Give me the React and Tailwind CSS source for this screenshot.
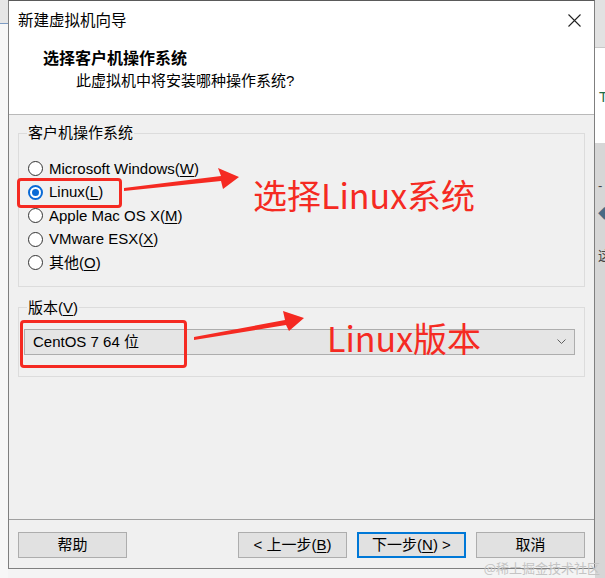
import React from 'react';

const font = "font-['Liberation_Sans','Noto_Sans_CJK_SC',sans-serif]";

const Radio = ({ checked, children }) => (
  <div className="flex items-center h-[23.5px]">
    <span
      className={`ml-[4px] w-[15px] h-[15px] rounded-full flex items-center justify-center bg-white ${
        checked ? 'border-2 border-[#0a6ad6]' : 'border border-[#333333]'
      }`}
    >
      {checked && <span className="w-[7px] h-[7px] rounded-full bg-[#0a6ad6]" />}
    </span>
    <span className="ml-[6px] leading-[20px]">{children}</span>
  </div>
);

const Button = ({ children, focused }) => (
  <button
    className={`w-[109px] h-[26px] flex items-center justify-center bg-[#e1e1e1] text-[15px] text-black ${
      focused ? 'border-2 border-[#0078d7]' : 'border border-[#adadad]'
    }`}
  >
    {children}
  </button>
);

const App = () => {
  return (
    <div className={`relative w-[605px] h-[578px] overflow-hidden flex bg-[#f4f4f4] text-black ${font}`}>
      {/* left strip of the window behind */}
      <div className="w-[8px] shrink-0 flex flex-col">
        <div className="h-[24px] bg-[#e6e6e6] border-b border-[#7d9cc4]" />
        <div className="flex-1 bg-[#f7f7f7]" />
      </div>

      {/* dialog */}
      <div className="w-[587px] h-[569px] shrink-0 flex flex-col border border-[#7f7f7f] border-t-[#5a5a5a] bg-[#f0f0f0]">
        <div className="bg-white border-b border-[#b9b9b9] pb-[23px]">
          <div className="h-[40px] flex items-center justify-between pl-[9px] pr-[13px]">
            <span className="text-[15.5px] leading-[20px]">新建虚拟机向导</span>
            <svg width="13" height="13" viewBox="0 0 13 13" className="-mt-[2px]">
              <path d="M0.5 0.5 L12.5 12.5 M12.5 0.5 L0.5 12.5" stroke="#222" strokeWidth="1.1" />
            </svg>
          </div>
          <div className="mt-[7px] pl-[34px] text-[16px] leading-[22px] font-bold">选择客户机操作系统</div>
          <div className="mt-[1px] pl-[67px] text-[15px] leading-[20px]">此虚拟机中将安装哪种操作系统?</div>
        </div>

        <div className="flex-1 flex flex-col px-[9px]">
          <fieldset className="mt-[8px] border border-[#dcdcdc] px-[5px] pt-[14px] pb-[11px] text-[15px]">
            <legend className="ml-[3px] px-[1px] leading-[20px]">客户机操作系统</legend>
            <Radio>
              Microsoft Windows(<u className="underline-offset-2">W</u>)
            </Radio>
            <Radio checked>
              Linux(<u className="underline-offset-2">L</u>)
            </Radio>
            <Radio>
              Apple Mac OS X(<u className="underline-offset-2">M</u>)
            </Radio>
            <Radio>
              VMware ESX(<u className="underline-offset-2">X</u>)
            </Radio>
            <Radio>
              其他(<u className="underline-offset-2">O</u>)
            </Radio>
          </fieldset>

          <fieldset className="mt-[11px] border border-[#dcdcdc] px-[5px] pt-[11px] pb-[21px] text-[15px]">
            <legend className="ml-[3px] px-[1px] leading-[20px]">
              版本(<u className="underline-offset-2">V</u>)
            </legend>
            <div className="mr-[4px] h-[26px] flex items-center justify-between bg-[#e5e5e5] border border-[#adadad] pl-[8px] pr-[8px]">
              <span className="leading-[20px]">CentOS 7 64 位</span>
              <svg width="9" height="5" viewBox="0 0 9 5">
                <path d="M0.5 0.5 L4.5 4.5 L8.5 0.5" fill="none" stroke="#606060" strokeWidth="1" />
              </svg>
            </div>
          </fieldset>
        </div>

        <div className="border-t border-[#a0a0a0] pt-[12px] pb-[10px] px-[9px] flex items-center">
          <Button>帮助</Button>
          <div className="flex-1" />
          <div className="flex gap-[10px]">
            <Button>
              &lt; 上一步(<u className="underline-offset-2">B</u>)
            </Button>
            <Button focused>
              下一步(<u className="underline-offset-2">N</u>) &gt;
            </Button>
            <Button>取消</Button>
          </div>
        </div>
      </div>

      {/* right strip of the window behind */}
      <div className="flex-1 min-w-0 overflow-hidden flex flex-col">
        <div className="h-[48px] bg-[#e2e2e2] border-b border-[#c8c8c8]" />
        <div className="h-[95px] bg-white flex items-end pb-[35px] pl-[4px] text-[14px] text-[#1d6b45]">T</div>
        <div className="flex-1 bg-[#d6d6d6] flex flex-col items-start pl-[3px] pt-[36px] text-[13px] text-[#444]">
          <span className="leading-[14px]">-</span>
          <span className="mt-[14px] leading-[14px] text-[#4a6a85]">◆</span>
          <span className="mt-[28px] leading-[14px]">这</span>
        </div>
      </div>

      {/* annotations */}
      <div className="absolute left-[17px] top-[178px] w-[105px] h-[30px] border-[3px] border-[#f52a22] rounded-[4px]" />
      <div className="absolute left-[20px] top-[320px] w-[167px] h-[48px] border-[3px] border-[#f52a22] rounded-[4px]" />
      <svg className="absolute left-0 top-0" width="605" height="578" viewBox="0 0 605 578">
        <polygon points="124,188 221,176 218,168 239,177 223,189 221,181 124,191" fill="#f52a22" />
        <polygon points="194,337 285,320 283,311 304,318 289,331 286,325 194,340" fill="#f52a22" />
      </svg>
      <div className="absolute left-[253px] top-[175px] text-[34px] leading-[40px] text-[#f52a22] font-['Noto_Sans_CJK_SC',sans-serif]">
        选择Linux系统
      </div>
      <div className="absolute left-[327px] top-[318px] text-[34px] leading-[40px] text-[#f52a22] font-['Noto_Sans_CJK_SC',sans-serif]">
        Linux版本
      </div>
      <div className="absolute right-[5px] top-[560px] text-[13px] leading-[16px] text-[#c4c4c4] font-['Noto_Sans_CJK_SC',sans-serif]">
        @稀土掘金技术社区
      </div>
    </div>
  );
};

export default App;
